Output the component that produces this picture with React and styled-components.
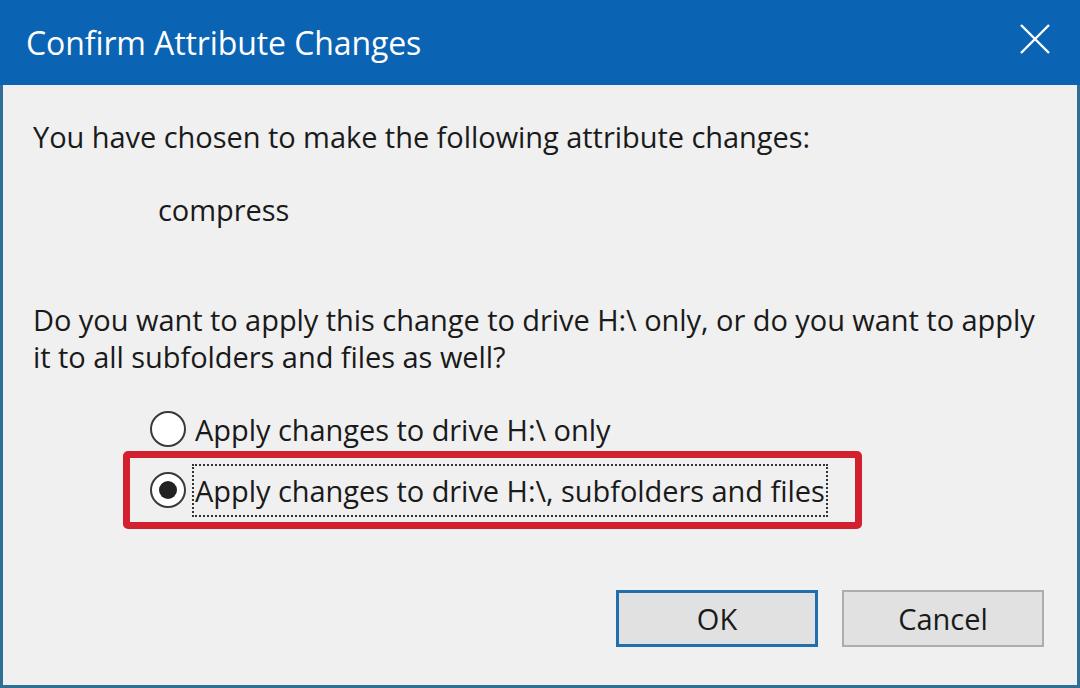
import React, { useState } from 'react'
import styled, { createGlobalStyle } from 'styled-components'

const GlobalStyle = createGlobalStyle`
    html, body {
        margin: 0;
        padding: 0;
        background: #f0f0f0;
    }
    body {
        font-family: "Open Sans", "Noto Sans", sans-serif;
        color: #1a1a1a;
    }
`;

const App = () => {
    const [scope, setScope] = useState('all');

    return (
        <>
            <GlobalStyle />
            <StWindow>
                <StTitleBar>
                    <StTitle>Confirm Attribute Changes</StTitle>
                    <StClose aria-label="Close">
                        <svg width="30" height="30" viewBox="0 0 30 30">
                            <path d="M1 1 L29 29 M29 1 L1 29" stroke="#fff" strokeWidth="2.4" fill="none" />
                        </svg>
                    </StClose>
                </StTitleBar>
                <StBody>
                    <StLine>You have chosen to make the following attribute changes:</StLine>
                    <StChange>compress</StChange>
                    <StQuestion>
                        Do you want to apply this change to drive H:\ only, or do you want to apply
                        <br />
                        it to all subfolders and files as well?
                    </StQuestion>
                    <StOptions>
                        <StOption>
                            <StRadio checked={scope === 'drive'} onClick={() => setScope('drive')} />
                            <StLabel onClick={() => setScope('drive')}>Apply changes to drive H:\ only</StLabel>
                        </StOption>
                        <StHighlight>
                            <StOption>
                                <StRadio checked={scope === 'all'} onClick={() => setScope('all')} />
                                <StLabel focused onClick={() => setScope('all')}>Apply changes to drive H:\, subfolders and files</StLabel>
                            </StOption>
                        </StHighlight>
                    </StOptions>
                    <StButtons>
                        <StButton primary>OK</StButton>
                        <StButton>Cancel</StButton>
                    </StButtons>
                </StBody>
            </StWindow>
        </>
    )
}

/* STYLED-COMPONENTS */

const StWindow = styled.div`
    display: flex;
    flex-direction: column;
    width: 1080px;
    height: 688px;
    overflow: hidden;
`;

const StTitleBar = styled.div`
    display: flex;
    align-items: center;
    justify-content: space-between;
    height: 85px;
    padding: 0 30px 0 26px;
    box-sizing: border-box;
    background-color: #0b63b4;
`;

const StTitle = styled.div`
    font-size: 32px;
    color: #ffffff;
    letter-spacing: -0.1px;
    margin-top: -1px;
`;

const StClose = styled.div`
    display: flex;
    margin-top: -8px;
`;

const StBody = styled.div`
    flex: 1;
    display: flex;
    flex-direction: column;
    padding: 33px 33px 0 30px;
    border: 3px solid #2f6f95;
    border-top: none;
    background-color: #f0f0f0;
    font-size: 29px;
    line-height: 37px;
    letter-spacing: -0.05px;
`;

const StLine = styled.div`
    white-space: nowrap;
`;

const StChange = styled.div`
    margin: 36px 0 0 125px;
`;

const StQuestion = styled.div`
    margin-top: 73px;
    white-space: nowrap;
`;

const StOptions = styled.div`
    display: flex;
    flex-direction: column;
    margin: 34px 0 0 90px;
`;

const StOption = styled.div`
    display: flex;
    align-items: center;
    height: 40px;
    padding-left: 27px;
`;

const StHighlight = styled.div`
    display: flex;
    align-items: center;
    width: 739px;
    height: 78px;
    box-sizing: border-box;
    margin-top: 2px;
    border: 7px solid #d3202f;
    border-radius: 5px;
    & > div {
        padding-left: 20px;
    }
`;

const StRadio = styled.span`
    position: relative;
    flex: none;
    width: 36px;
    height: 36px;
    box-sizing: border-box;
    border: 2px solid #3a3a3a;
    border-radius: 50%;
    background-color: #ffffff;
    margin-right: 6px;
    cursor: pointer;
    &::after {
        content: '';
        position: absolute;
        top: 7px;
        left: 7px;
        width: 18px;
        height: 18px;
        border-radius: 50%;
        background-color: #222222;
        display: ${props => props.checked ? 'block' : 'none'};
    }
`;

const StLabel = styled.span`
    white-space: nowrap;
    padding: 6px 1px;
    border: 2px dotted ${props => props.focused ? '#333333' : 'transparent'};
    cursor: pointer;
`;

const StButtons = styled.div`
    display: flex;
    justify-content: flex-end;
    gap: 24px;
    margin-top: 61px;
`;

const StButton = styled.button`
    width: 202px;
    height: 57px;
    box-sizing: border-box;
    font-family: inherit;
    font-size: 29px;
    color: #1a1a1a;
    background-color: #e1e1e1;
    border: ${props => props.primary ? '3px solid #1f6fae' : '2px solid #adadad'};
    cursor: pointer;
`;

export default App;
